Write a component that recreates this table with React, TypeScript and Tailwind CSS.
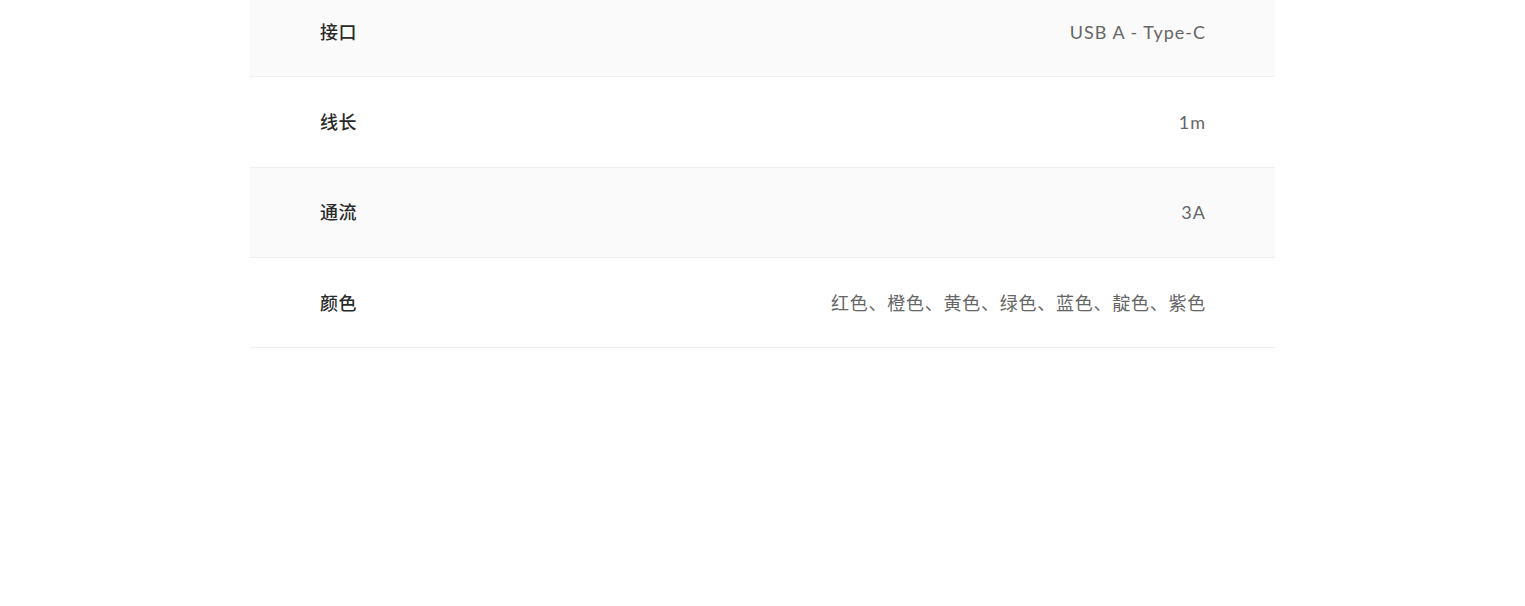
const SPECS = [
  { label: '接口', value: 'USB A - Type-C', latin: true },
  { label: '线长', value: '1m', latin: true },
  { label: '通流', value: '3A', latin: true },
  { label: '颜色', value: '红色、橙色、黄色、绿色、蓝色、靛色、紫色', latin: false },
]

export default function App() {
  return (
    <div
      className="w-full h-[606px] bg-white overflow-hidden"
      style={{ fontFamily: 'Lato, "Noto Sans CJK SC", sans-serif' }}
    >
      <div className="w-[1025px] mx-auto mt-[-13px]">
        {SPECS.map((row, i) => (
          <div
            key={row.label}
            className={
              'h-[90.3px] flex items-center justify-between px-[70px] pt-[1px] border-b border-[#efefef] ' +
              (i % 2 === 0 ? 'bg-[#fafafa]' : 'bg-white')
            }
          >
            <span className="text-[18px] font-medium text-[#2a2a2a] tracking-[0.5px]">{row.label}</span>
            <span
              className={
                'text-[18px] text-[#666] mr-[-1px] ' +
                (row.latin ? 'tracking-[1px]' : 'tracking-[0.75px]')
              }
            >
              {row.value}
            </span>
          </div>
        ))}
      </div>
    </div>
  )
}
